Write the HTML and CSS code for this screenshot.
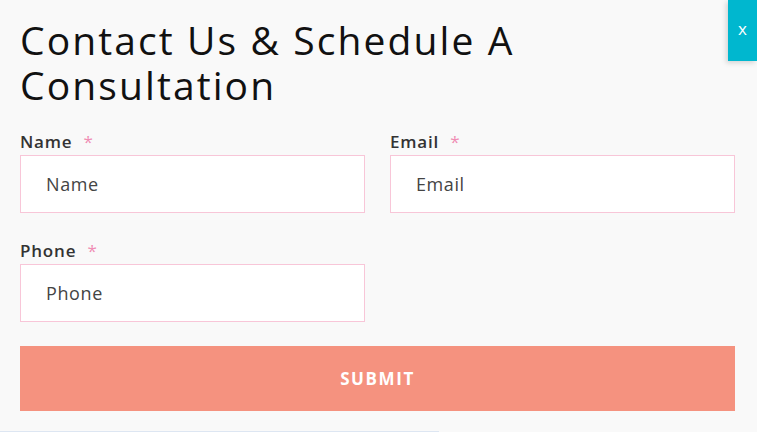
FILE: index.html
```html
<!DOCTYPE html>
<html lang="en">
<head>
    <meta charset="UTF-8">
    <meta name="viewport" content="width=device-width, initial-scale=1.0">
    <title>Contact Us</title>
    <link rel="stylesheet" href="styles.css">
</head>
<body>
    <div class="popup">
        <button class="close-btn">x</button>
        <h1>Contact Us &amp; Schedule A Consultation</h1>
        <form class="contact-form">
            <div class="field">
                <label>Name <span class="req">*</span></label>
                <input type="text" placeholder="Name">
            </div>
            <div class="field">
                <label>Email <span class="req">*</span></label>
                <input type="text" placeholder="Email">
            </div>
            <div class="field">
                <label>Phone <span class="req">*</span></label>
                <input type="text" placeholder="Phone">
            </div>
            <button type="button" class="submit">SUBMIT</button>
        </form>
        <div class="bottom-line"></div>
    </div>
</body>
</html>
```

FILE: styles.css
```css
body {
    margin: 0;
    background: #f9f9f9;
    font-family: 'Open Sans', 'Noto Sans', sans-serif;
    color: #111;
}
.popup {
    position: relative;
    padding: 17px 22px 0 20px;
}
h1 {
    margin: 0;
    width: 600px;
    font-size: 39px;
    font-weight: 400;
    line-height: 45px;
    letter-spacing: 2.1px;
    color: #111;
}
.close-btn {
    position: absolute;
    top: 0;
    right: 0;
    width: 29px;
    height: 61px;
    border: none;
    padding: 0 0 4px;
    background: #00b7cf;
    color: #fff;
    font-family: 'Open Sans', sans-serif;
    font-size: 17px;
    box-shadow: -2px 2px 5px rgba(0, 0, 0, 0.15);
}
.contact-form {
    display: grid;
    grid-template-columns: 1fr 1fr;
    column-gap: 25px;
    margin-top: 25px;
}
.field {
    display: flex;
    flex-direction: column;
    margin-bottom: 28px;
}
label {
    font-size: 17px;
    font-weight: 600;
    line-height: 20px;
    letter-spacing: 0.8px;
    color: #333;
    margin-bottom: 3px;
}
.req {
    color: #f08db4;
    font-weight: 400;
    margin-left: 6px;
}
input {
    height: 58px;
    box-sizing: border-box;
    border: 1px solid #f8c6d8;
    background: #fff;
    padding: 0 25px;
    font-family: 'Open Sans', sans-serif;
    font-size: 18px;
    letter-spacing: 0.6px;
    color: #444;
    outline: none;
}
input::placeholder {
    color: #444;
}
.submit {
    grid-column: 1 / 3;
    margin-top: -4px;
    height: 65px;
    border: none;
    background: #f5927f;
    color: #fff;
    font-family: 'Open Sans', sans-serif;
    font-size: 17px;
    font-weight: 700;
    letter-spacing: 1.6px;
}
.bottom-line {
    width: 439px;
    height: 1px;
    margin: 20px 0 0 -20px;
    background: #dde6f2;
}
```
